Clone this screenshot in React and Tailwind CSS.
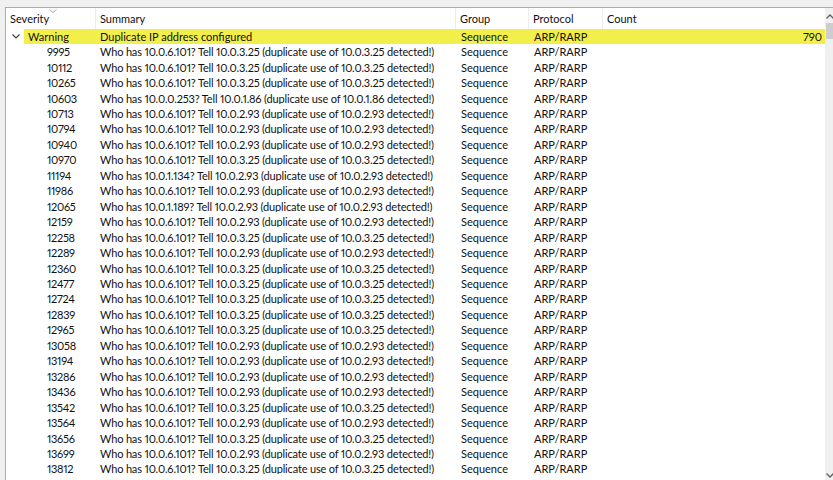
import React from "react";

const rows = [
  ["9995", "10.0.6.101", "10.0.3.25"],
  ["10112", "10.0.6.101", "10.0.3.25"],
  ["10265", "10.0.6.101", "10.0.3.25"],
  ["10603", "10.0.0.253", "10.0.1.86"],
  ["10713", "10.0.6.101", "10.0.2.93"],
  ["10794", "10.0.6.101", "10.0.2.93"],
  ["10940", "10.0.6.101", "10.0.2.93"],
  ["10970", "10.0.6.101", "10.0.3.25"],
  ["11194", "10.0.1.134", "10.0.2.93"],
  ["11986", "10.0.6.101", "10.0.2.93"],
  ["12065", "10.0.1.189", "10.0.2.93"],
  ["12159", "10.0.6.101", "10.0.2.93"],
  ["12258", "10.0.6.101", "10.0.3.25"],
  ["12289", "10.0.6.101", "10.0.2.93"],
  ["12360", "10.0.6.101", "10.0.3.25"],
  ["12477", "10.0.6.101", "10.0.3.25"],
  ["12724", "10.0.6.101", "10.0.3.25"],
  ["12839", "10.0.6.101", "10.0.3.25"],
  ["12965", "10.0.6.101", "10.0.3.25"],
  ["13058", "10.0.6.101", "10.0.2.93"],
  ["13194", "10.0.6.101", "10.0.2.93"],
  ["13286", "10.0.6.101", "10.0.2.93"],
  ["13436", "10.0.6.101", "10.0.2.93"],
  ["13542", "10.0.6.101", "10.0.3.25"],
  ["13564", "10.0.6.101", "10.0.2.93"],
  ["13656", "10.0.6.101", "10.0.3.25"],
  ["13699", "10.0.6.101", "10.0.2.93"],
  ["13812", "10.0.6.101", "10.0.3.25"],
];

export default function App() {
  return (
    <div
      className="w-[833px] h-[480px] overflow-hidden bg-[#f0f0f0] pt-[7px] pl-[5px] text-[11px] text-[#111] leading-none proportional-nums"
      style={{ fontFamily: 'Lato, "Noto Sans", sans-serif' }}
    >
      <div className="flex w-[837px] h-[500px] border-l border-t border-[#adadad] bg-white">
        <div className="w-[819px] flex flex-col">
          {/* header */}
          <div className="relative flex h-[21px] items-center shrink-0">
            <div className="w-[90px] h-full flex items-center pl-[4px] border-r border-[#ececec] relative">
              Severity
              <svg className="absolute left-[43px] top-[1px]" width="8" height="4" viewBox="0 0 8 4">
                <polyline points="0.5,0.5 4,3.5 7.5,0.5" fill="none" stroke="#a8a8a8" strokeWidth="1" />
              </svg>
            </div>
            <div className="w-[360px] h-full flex items-center pl-[4px] border-r border-[#ececec]">Summary</div>
            <div className="w-[73px] h-full flex items-center pl-[4px] border-r border-[#ececec]">Group</div>
            <div className="w-[74px] h-full flex items-center pl-[4px] border-r border-[#ececec]">Protocol</div>
            <div className="flex-1 h-full flex items-center pl-[4px]">Count</div>
          </div>
          {/* warning row */}
          <div className="flex h-[15px] items-center shrink-0">
            <div className="w-[18px] flex items-center justify-center pl-[1px]">
              <svg width="8" height="5" viewBox="0 0 8 5">
                <polyline points="0.5,0.5 4,4 7.5,0.5" fill="none" stroke="#404040" strokeWidth="1.2" />
              </svg>
            </div>
            <div className="flex-1 h-full flex items-center bg-[#f3ef4a]">
              <div className="w-[72px] pl-[4px]">Warning</div>
              <div className="w-[360px] pl-[4px]">Duplicate IP address configured</div>
              <div className="w-[73px] pl-[5px]">Sequence</div>
              <div className="w-[74px] pl-[5px]">ARP/RARP</div>
              <div className="flex-1 text-right pr-[3px]">790</div>
            </div>
          </div>
          {/* child rows */}
          {rows.map(([n, who, tell]) => (
            <div key={n} className="flex h-[15.46px] items-center shrink-0">
              <div className="w-[90px] pl-[41px] tracking-[-0.3px]">{n}</div>
              <div className="w-[360px] pl-[4px] whitespace-nowrap overflow-hidden tracking-[-0.16px]">
                Who has {who}? Tell {tell} (duplicate use of {tell} detected!)
              </div>
              <div className="w-[73px] pl-[5px]">Sequence</div>
              <div className="w-[74px] pl-[5px]">ARP/RARP</div>
              <div className="flex-1" />
            </div>
          ))}
        </div>
        {/* scrollbar */}
        <div className="w-[17px] h-[473px] bg-[#f0f0f0] relative shrink-0">
          <svg className="absolute left-[1px] top-[6px]" width="8" height="5" viewBox="0 0 8 5">
            <polyline points="0.5,4.5 4,1 7.5,4.5" fill="none" stroke="#606060" strokeWidth="1.3" />
          </svg>
          <div className="absolute left-[1px] top-[15px] w-[15px] h-[16px] bg-[#cdcdcd]" />
          <svg className="absolute left-[1px] top-[465px]" width="8" height="5" viewBox="0 0 8 5">
            <polyline points="0.5,0.5 4,4 7.5,0.5" fill="none" stroke="#606060" strokeWidth="1.3" />
          </svg>
        </div>
      </div>
    </div>
  );
}
